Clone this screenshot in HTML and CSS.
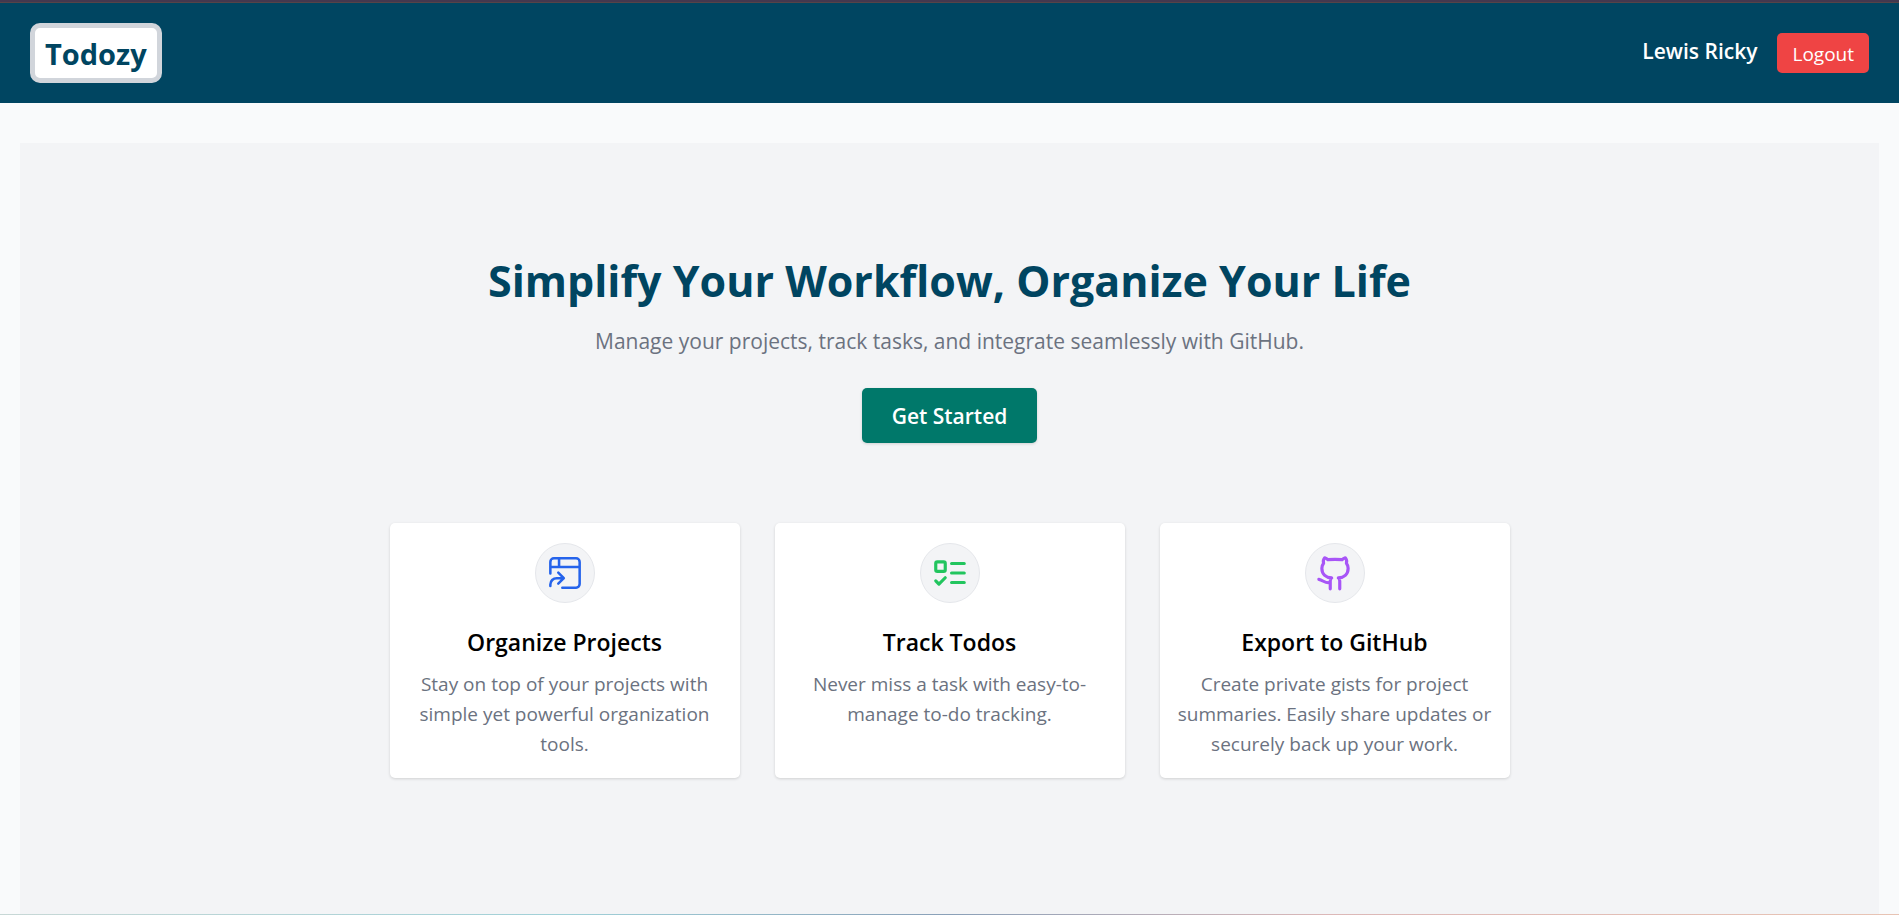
FILE: index.html
```html
<!DOCTYPE html>
<html lang="en">
<head>
<meta charset="utf-8">
<title>Todozy</title>
<link rel="stylesheet" href="styles.css">
</head>
<body>
<header class="navbar">
  <a class="brand" href="#">Todozy</a>
  <div class="account">
    <span class="user-name">Lewis Ricky</span>
    <button class="logout" type="button">Logout</button>
  </div>
</header>
<main class="hero">
  <h1 class="hero-title">Simplify Your Workflow, Organize Your Life</h1>
  <p class="hero-text">Manage your projects, track tasks, and integrate seamlessly with GitHub.</p>
  <button class="cta" type="button">Get Started</button>
  <section class="features">
    <article class="card">
      <span class="card-icon blue">
        <svg viewBox="0 0 24 24" fill="none" stroke="currentColor" stroke-width="1.6" stroke-linecap="round" stroke-linejoin="round" aria-hidden="true"><path d="M2.750 12.300V5A2.250 2.250 0 0 1 5 2.750h14A2.250 2.250 0 0 1 21.250 5v14A2.250 2.250 0 0 1 19 21.250h-8.700M2.750 8.250h18.500M8.250 2.750v5.500M2.750 20.250v-1a4 4 0 0 1 4-4h4.500M7.750 11.750l3.500 3.500-3.500 3.500"/></svg>
      </span>
      <h2 class="card-title">Organize Projects</h2>
      <p class="card-text">Stay on top of your projects with simple yet powerful organization tools.</p>
    </article>
    <article class="card">
      <span class="card-icon green">
        <svg viewBox="0 0 24 24" fill="none" stroke="currentColor" stroke-width="2" stroke-linecap="round" stroke-linejoin="round" aria-hidden="true"><rect x="3" y="5" width="6" height="6" rx="1"/><path d="m3 17 2 2 4-4M13 6h8M13 12h8M13 18h8"/></svg>
      </span>
      <h2 class="card-title">Track Todos</h2>
      <p class="card-text">Never miss a task with easy-to-manage to-do tracking.</p>
    </article>
    <article class="card">
      <span class="card-icon purple">
        <svg viewBox="0 0 24 24" fill="none" stroke="currentColor" stroke-width="2" stroke-linecap="round" stroke-linejoin="round" aria-hidden="true"><path d="M9 22v-4.900c0-.800.300-1.500.900-2-3.500-.200-6.200-2.200-6.200-6.100 0-1.200.4-2.300 1.100-3.200-.4-1.200-.1-2.400.7-3.400.9.200 1.500.6 2 1.200 3-.3 6-.3 9 0 .5-.6 1.100-1 2-1.200.8 1 1.100 2.200.7 3.400.7.900 1.100 2 1.100 3.200 0 3.900-2.700 5.900-6.200 6.100.6.500.9 1.200.9 2V22M9 18.200c-4.400.2-4.300-1.700-7.200-2.200"/></svg>
      </span>
      <h2 class="card-title">Export to GitHub</h2>
      <p class="card-text">Create private gists for project summaries. Easily share updates or securely back up your work.</p>
    </article>
  </section>
</main>
<div class="bottom-line"></div>
</body>
</html>
```
FILE: styles.css
```css
* { box-sizing: border-box; margin: 0; }

body {
  min-height: 100vh;
  display: flex;
  flex-direction: column;
  border-top: 2px solid #43384f;
  background: #f9fafb;
  font-family: "Open Sans", "Noto Sans", sans-serif;
  font-size: 19px;
  line-height: 30px;
}

button { font: inherit; border: 0; cursor: pointer; }

.navbar {
  display: flex;
  justify-content: space-between;
  align-items: center;
  padding: 20px 30px;
  border-top: 1px solid #554448;
  background: #004561;
}

.brand {
  padding: 6px 10px 4px;
  border: 5px solid #d1d5db;
  border-radius: 10px;
  background: #fff;
  color: #004561;
  font-size: 29px;
  font-weight: 700;
  line-height: 40px;
  text-decoration: none;
}

.account { display: flex; align-items: center; gap: 20px; }

.user-name {
  padding-bottom: 5px;
  color: #fff;
  font-size: 21px;
  font-weight: 600;
}

.logout {
  padding: 6px 15px 4px;
  border-radius: 5px;
  background: #ef4444;
  color: #fff;
}

.hero {
  flex: 1;
  display: flex;
  flex-direction: column;
  align-items: center;
  margin: 40px 20px 0;
  padding: 110px 20px 60px;
  background: #f3f4f6;
  text-align: center;
}

.hero-title {
  color: #004561;
  font-size: 43px;
  font-weight: 700;
  line-height: 56px;
}

.hero-text {
  margin-top: 17px;
  color: #6b7280;
  font-size: 21px;
}

.cta {
  margin-top: 32px;
  padding: 13px 30px 12px;
  border-radius: 5px;
  background: #00786a;
  box-shadow: 0 1px 3px rgba(0, 0, 0, 0.15);
  color: #fff;
  font-size: 21px;
  font-weight: 600;
}

.features {
  display: grid;
  grid-template-columns: repeat(3, 1fr);
  gap: 35px;
  width: 100%;
  max-width: 1120px;
  margin-top: 80px;
}

.card {
  display: flex;
  flex-direction: column;
  align-items: center;
  padding: 20px 15px;
  border-radius: 5px;
  background: #fff;
  box-shadow: 0 1px 3px rgba(0, 0, 0, 0.15);
}

.card-icon {
  display: flex;
  padding: 10px;
  border: 1px solid #e5e7eb;
  border-radius: 50%;
  background: #f3f4f6;
}

.card-icon svg { width: 38px; height: 38px; }

.blue { color: #2563eb; }
.green { color: #22c55e; }
.purple { color: #a855f7; }

.card-title {
  margin-top: 19px;
  color: #000;
  font-size: 23px;
  font-weight: 600;
  line-height: 40px;
}

.card-text { margin-top: 7px; margin-bottom: -1px; color: #6b7280; }

.bottom-line {
  height: 1px;
  background: linear-gradient(90deg, #c8d8d6, #a0d0d8 30%, #8aa0b8 50%, #dcb8b8 70%, #e8c4b4);
}
```
